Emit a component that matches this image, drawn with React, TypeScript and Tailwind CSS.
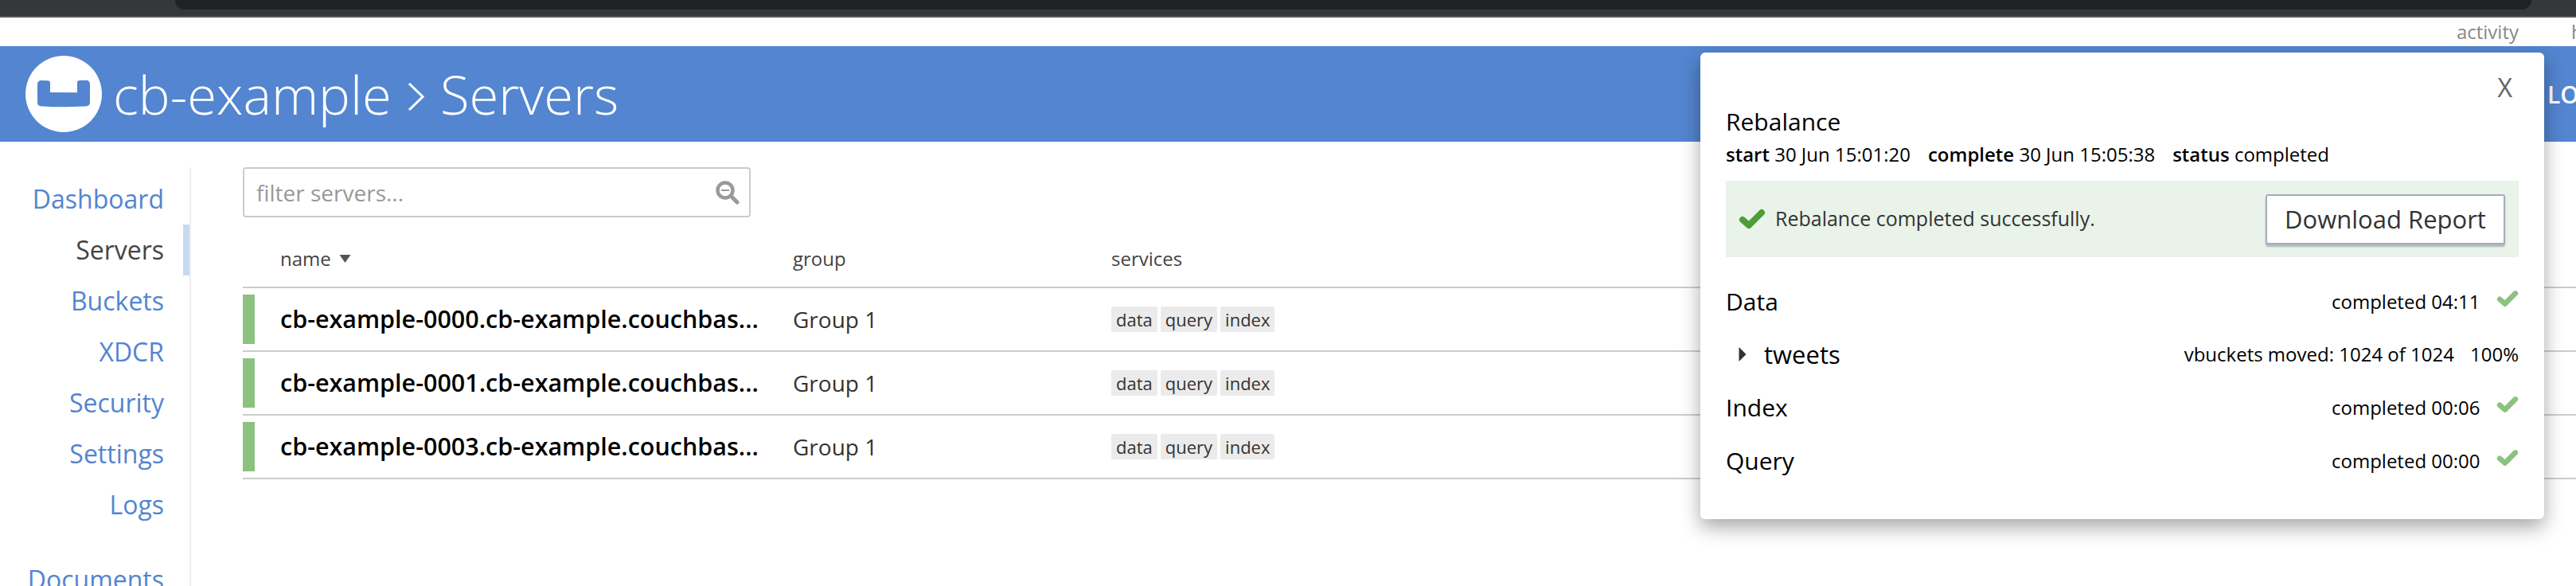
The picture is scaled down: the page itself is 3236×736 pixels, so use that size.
const font = { fontFamily: '"Open Sans", sans-serif' };

const mainNav = ['Dashboard', 'Servers', 'Buckets', 'XDCR', 'Security', 'Settings', 'Logs'];
const servers = ['cb-example-0000', 'cb-example-0001', 'cb-example-0003'];
const steps = [
  { label: 'Index', time: '00:06' },
  { label: 'Query', time: '00:00' },
];

function Logo() {
  return (
    <svg viewBox="0 0 96 96" className="h-[96px] w-[96px] shrink-0">
      <circle cx="48" cy="48" r="48" fill="#fff" />
      <path
        d="M15 36c0-3 2-5 5-5l8 .2c2 0 3 1 3 3V46l34 .3V34c0-2 1-3 3-3l8-.2c3 0 5 2 5 5v23c0 3-2 4.500-5 4.800-20 1-45 1-56 0-3-.3-5-1.800-5-4.800z"
        fill="#5385d0"
      />
    </svg>
  );
}

function Check({ className }: { className: string }) {
  return (
    <svg viewBox="0 0 34 26" className={className}>
      <path d="M5 14l8 7L29 5" fill="none" stroke="currentColor" strokeWidth="8" strokeLinecap="round" strokeLinejoin="round" />
    </svg>
  );
}

function SearchIcon() {
  return (
    <svg viewBox="0 0 30 30" className="h-[30px] w-[30px]">
      <circle cx="12" cy="12" r="9.500" fill="none" stroke="#999" strokeWidth="4.500" />
      <path d="M19 19l8 8" stroke="#999" strokeWidth="5" strokeLinecap="round" />
      <path d="M7 12h10" stroke="#999" strokeWidth="2" />
    </svg>
  );
}

function Tag({ children }: { children: string }) {
  return <span className="flex h-[32px] items-center rounded-[2px] bg-[#ebebeb] px-[6px] text-[22px] text-[#333]">{children}</span>;
}

function StepRow({ label, time }: { label: string; time: string }) {
  return (
    <div className="flex h-[67px] items-center justify-between">
      <span className="text-[30px] font-medium text-black">{label}</span>
      <span className="flex items-center text-[24px] text-black">
        <span className="w-[207px]">completed {time}</span>
        <Check className="h-[22px] w-[28px] -translate-y-[4px] text-[#8cc180]" />
      </span>
    </div>
  );
}

function RebalancePopup() {
  return (
    <div className="absolute top-[66px] left-[2136px] h-[586px] w-[1060px] rounded-[6px] bg-white px-[32px] pt-[22px] shadow-[0_10px_24px_rgba(0,0,0,0.35)]">
      <div className="flex justify-end pr-[8px] text-[32px] leading-[44px] text-[#666]">X</div>
      <div className="mt-[1px] text-[30px] leading-[40px] font-medium text-black">Rebalance</div>
      <div className="mt-[3px] flex gap-[22px] text-[24px] leading-[36px] text-black">
        <span><b className="font-semibold">start</b> 30 Jun 15:01:20</span>
        <span><b className="font-semibold">complete</b> 30 Jun 15:05:38</span>
        <span><b className="font-semibold">status</b> completed</span>
      </div>
      <div className="mt-[15px] flex h-[96px] items-center justify-between bg-[#e9f3e9] pr-[17px] pl-[16px]">
        <div className="flex items-center gap-[12px] text-[25px] font-medium text-[#333]">
          <Check className="h-[26px] w-[34px] text-[#4e9d35]" />
          Rebalance completed successfully.
        </div>
        <button className="h-[63px] w-[301px] rounded-[3px] border-2 border-[#a4adbd] bg-white text-[31px] text-[#333] shadow-[0_3px_2px_rgba(100,115,140,0.45)]">
          Download Report
        </button>
      </div>
      <div className="mt-[22px]">
        <StepRow label="Data" time="04:11" />
        <div className="flex h-[66px] items-center justify-between">
          <span className="flex items-center gap-[22px] pl-[16px] text-[31px] font-medium text-black">
            <svg viewBox="0 0 10 20" className="h-[18px] w-[10px] fill-[#333]"><path d="M0 0l10 10L0 20z" /></svg>
            tweets
          </span>
          <span className="flex gap-[20px] text-[24px] text-black">
            <span>vbuckets moved: 1024 of 1024</span>
            <span>100%</span>
          </span>
        </div>
        {steps.map((step) => (
          <StepRow key={step.label} label={step.label} time={step.time} />
        ))}
      </div>
    </div>
  );
}

export default function App() {
  return (
    <div style={font} className="relative h-[736px] w-[3236px] overflow-hidden bg-white">
      <div className="h-[22px] border-b-2 border-[#55565a] bg-[#36373b] pr-[56px] pl-[220px]">
        <div className="h-[12px] rounded-b-[14px] bg-[#202124]" />
      </div>

      <div className="flex h-[36px] items-center justify-end gap-[66px] text-[24px] text-[#888]">
        <span>activity</span>
        <span className="w-[6px] overflow-hidden">h</span>
      </div>

      <header className="flex h-[120px] items-center justify-between bg-[#5385d0] pl-[32px] text-white">
        <div className="flex items-center gap-[14px]">
          <Logo />
          <div className="flex items-center text-[67px] leading-none font-light">
            <span>cb-example</span>
            <svg viewBox="0 0 21 35" className="mt-[6px] mr-[20px] ml-[20px] h-[35px] w-[21px]">
              <path d="M2 1l17 16.500L2 34" fill="none" stroke="#fff" strokeWidth="3" />
            </svg>
            <span>Servers</span>
          </div>
        </div>
        <div className="w-[36px] overflow-hidden text-[30px] font-semibold whitespace-nowrap">LOG OUT</div>
      </header>

      <div className="mt-[32px] flex">
        <nav className="relative h-[600px] w-[240px] shrink-0 border-r-2 border-[#eeeeee] text-right text-[32px] leading-[64px]">
          <ul className="pt-[8px] pr-[32px]">
            {mainNav.map((item) => (
              <li key={item} className={item === 'Servers' ? 'text-[#444]' : 'text-[#5385d0]'}>
                {item}
              </li>
            ))}
            <li className="mt-[30px] text-[#5385d0]">Documents</li>
          </ul>
          <div className="absolute top-[72px] right-0 h-[64px] w-[8px] bg-[#c8daf3]" />
        </nav>

        <main className="ml-[65px] flex-1">
          <div className="flex h-[63px] w-[638px] items-center justify-between rounded-[4px] border-2 border-[#cccccc] pr-[12px] pl-[15px] text-[28px] text-[#999]">
            <span>filter servers...</span>
            <SearchIcon />
          </div>

          <div className="flex h-[89px] items-center border-b-2 border-[#cccccc] pt-[16px] text-[24px] text-[#444]">
            <span className="flex w-[691px] items-center gap-[10px] pl-[47px]">
              name
              <svg viewBox="0 0 14 10" className="h-[10px] w-[15px] fill-[#555]"><path d="M0 0h14L7 10z" /></svg>
            </span>
            <span className="w-[400px]">group</span>
            <span>services</span>
          </div>

          {servers.map((name) => (
            <div key={name} className="flex h-[80px] items-center border-b-2 border-[#cccccc]">
              <div className="h-[62px] w-[15px] bg-[#8cc180]" />
              <div className="ml-[32px] w-[644px] text-[30.500px] font-semibold text-black">{name}.cb-example.couchbas...</div>
              <div className="w-[400px] text-[28px] text-[#333]">Group 1</div>
              <div className="flex gap-[4px]">
                <Tag>data</Tag>
                <Tag>query</Tag>
                <Tag>index</Tag>
              </div>
            </div>
          ))}
        </main>
      </div>

      <RebalancePopup />
    </div>
  );
}
